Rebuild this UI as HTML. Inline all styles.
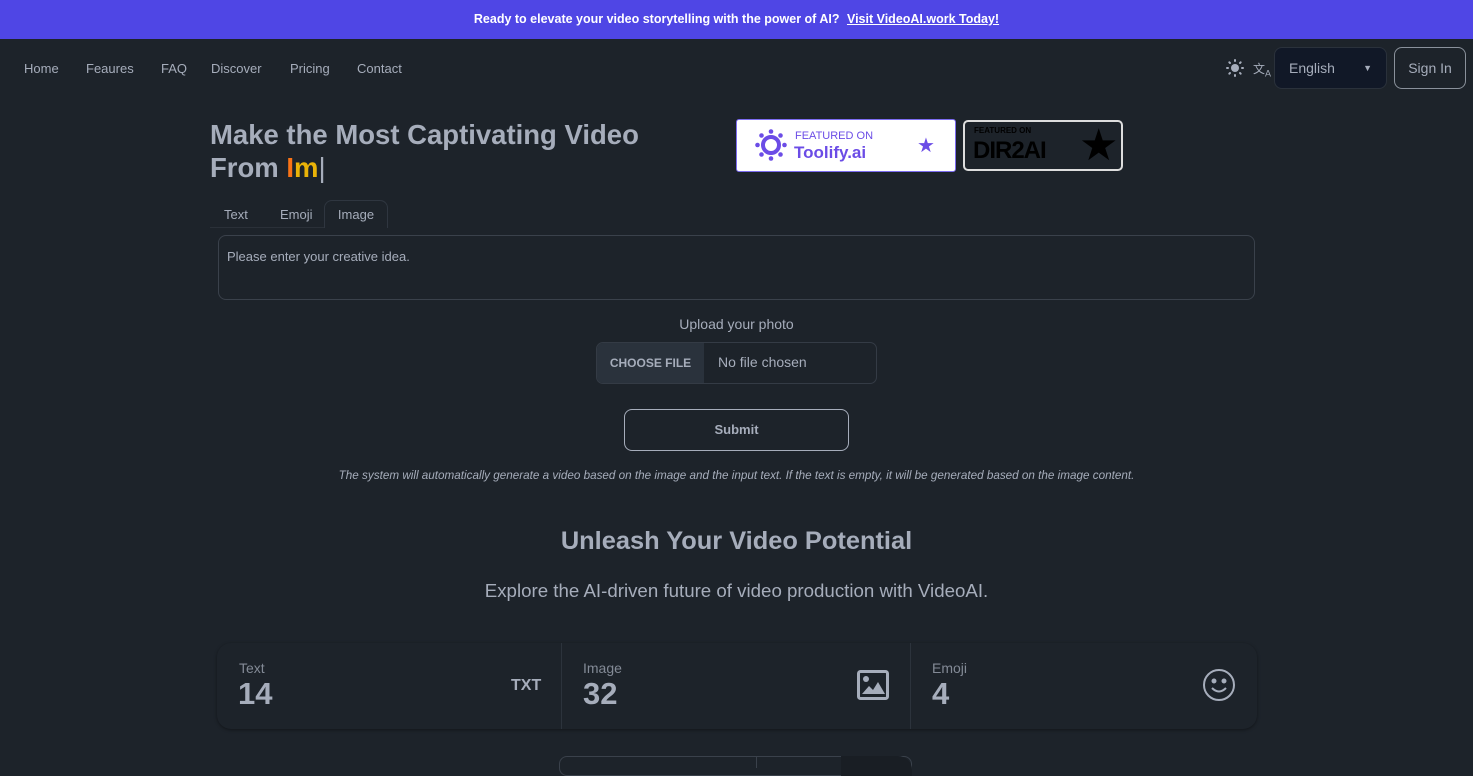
<!DOCTYPE html>
<html><head><meta charset="utf-8"><style>
*{box-sizing:border-box;margin:0;padding:0}
body{width:1473px;height:768px;overflow:hidden;background:#1d232a;color:#a6adbb;font-family:"Liberation Sans",sans-serif;position:relative}
.banner{height:39px;background:#4f46e5;color:#fff;font-size:12.5px;font-weight:bold;text-align:center;line-height:39px}
.banner u{margin-left:4px}
.nav a{position:absolute;top:61px;font-size:13px;color:#a6adbb}
.abs{position:absolute}
h1{position:absolute;left:210px;top:118px;font-size:27.5px;line-height:33px;font-weight:bold;color:#a6adbb}
.tabs span{position:absolute;top:207px;font-size:13px}
</style></head><body>
<div class="banner">Ready to elevate your video storytelling with the power of AI? <u>Visit VideoAI.work Today!</u></div>
<div class="nav">
<a style="left:24px">Home</a><a style="left:86px">Feaures</a><a style="left:161px">FAQ</a><a style="left:211px">Discover</a><a style="left:290px">Pricing</a><a style="left:357px">Contact</a>
</div>
<svg class="abs" style="left:1226px;top:59px" width="18" height="18" viewBox="0 0 18 18" fill="#a6adbb"><circle cx="9" cy="9" r="4"/><g stroke="#a6adbb" stroke-width="2" stroke-linecap="round"><path d="M9 1v1M9 16v1M1 9h1M16 9h1M3.3 3.3l.7.7M14 14l.7.7M3.3 14.7l.7-.7M14 4l.7-.7"/></g></svg>
<div class="abs" style="left:1253px;top:60px;font-size:12px;color:#a6adbb">文<sub style="font-size:9px">A</sub></div>
<div class="abs" style="left:1274px;top:47px;width:113px;height:42px;background:#111827;border:1px solid #2a313b;border-radius:8px;font-size:14px;line-height:40px;padding-left:14px">English<span style="position:absolute;right:14px;top:0;font-size:9px">▼</span></div>
<div class="abs" style="left:1394px;top:47px;width:72px;height:42px;border:1px solid #8a919b;border-radius:8px;font-size:14px;line-height:40px;text-align:center">Sign In</div>
<h1>Make the Most Captivating Video<br>From <span style="color:#f97316">I</span><span style="color:#eab308">m</span><span style="font-weight:normal">|</span></h1>
<div class="abs" style="left:736px;top:119px;width:220px;height:53px;background:#fff;border:1px solid #7c6cf0;border-radius:3px">
<svg class="abs" style="left:18px;top:9px" width="32" height="32" viewBox="0 0 32 32"><circle cx="16" cy="16" r="8" fill="none" stroke="#6b4ce6" stroke-width="4"/><g fill="#6b4ce6"><circle cx="16" cy="2.5" r="2.3"/><circle cx="16" cy="29.5" r="2.3"/><circle cx="2.5" cy="16" r="2.3"/><circle cx="29.5" cy="16" r="2.3"/><circle cx="6.5" cy="6.5" r="2.3"/><circle cx="25.5" cy="25.5" r="2.3"/><circle cx="6.5" cy="25.5" r="2.3"/><circle cx="25.5" cy="6.5" r="2.3"/></g></svg>
<div class="abs" style="left:58px;top:10px;font-size:11px;color:#6b4ce6">FEATURED ON</div>
<div class="abs" style="left:57px;top:23px;font-size:17px;font-weight:bold;color:#6b4ce6">Toolify.ai</div>
<div class="abs" style="left:180px;top:13px;font-size:20px;color:#6b4ce6">★</div>
</div>
<div class="abs" style="left:963px;top:120px;width:160px;height:51px;background:#1d232a;border:2px solid #ddd;border-radius:5px;color:#000">
<div class="abs" style="left:9px;top:4px;font-size:8px;font-weight:bold;color:#000">FEATURED ON</div>
<div class="abs" style="left:8px;top:15px;font-size:24px;font-weight:bold;color:#000;letter-spacing:-1px">DIR2AI</div>
<div class="abs" style="left:114px;top:-2px;font-size:44px;color:#000">★</div>
</div>
<div class="tabs"><span style="left:224px">Text</span><span style="left:280px">Emoji</span></div>
<div class="abs" style="left:324px;top:200px;width:64px;height:28px;border:1px solid #2f3640;border-bottom:none;border-radius:8px 8px 0 0;font-size:13px;text-align:center;line-height:27px">Image</div>
<div class="abs" style="left:210px;top:227px;width:114px;height:1px;background:#2a3038"></div>
<div class="abs" style="left:218px;top:235px;width:1037px;height:65px;border:1px solid #3a414b;border-radius:8px;font-size:13px;padding:13px 8px">Please enter your creative idea.</div>
<div class="abs" style="left:0;width:1473px;top:316px;text-align:center;font-size:14px">Upload your photo</div>
<div class="abs" style="left:596px;top:342px;width:281px;height:42px;border:1px solid #343b45;border-radius:7px;overflow:hidden;font-size:14px">
<div class="abs" style="left:0;top:0;width:107px;height:42px;background:#2a323c;font-size:12px;font-weight:bold;line-height:40px;text-align:center">CHOOSE FILE</div>
<div class="abs" style="left:121px;top:11px">No file chosen</div></div>
<div class="abs" style="left:624px;top:409px;width:225px;height:42px;border:1px solid #a6adbb;border-radius:8px;font-size:13px;font-weight:bold;line-height:40px;text-align:center">Submit</div>
<div class="abs" style="left:0;width:1473px;top:469px;text-align:center;font-size:11.7px;font-style:italic">The system will automatically generate a video based on the image and the input text. If the text is empty, it will be generated based on the image content.</div>
<div class="abs" style="left:0;width:1473px;top:527px;text-align:center;font-size:25.4px;font-weight:bold">Unleash Your Video Potential</div>
<div class="abs" style="left:0;width:1473px;top:580px;text-align:center;font-size:18.7px">Explore the AI-driven future of video production with VideoAI.</div>
<div class="abs" style="left:217px;top:643px;width:1040px;height:86px;border-radius:14px;background:#1d232a;box-shadow:0 1px 3px rgba(0,0,0,.4)">
<div class="abs" style="left:344px;top:0;width:1px;height:86px;background:#2c333c"></div>
<div class="abs" style="left:693px;top:0;width:1px;height:86px;background:#2c333c"></div>
<div class="abs" style="left:22px;top:17px;font-size:14px;color:#838a96">Text</div>
<div class="abs" style="left:21px;top:33px;font-size:31px;font-weight:bold">14</div>
<div class="abs" style="left:294px;top:34px;font-size:16px;font-weight:bold">TXT</div>
<div class="abs" style="left:366px;top:17px;font-size:14px;color:#838a96">Image</div>
<div class="abs" style="left:366px;top:33px;font-size:31px;font-weight:bold">32</div>
<svg class="abs" style="left:640px;top:27px" width="32" height="30" viewBox="0 0 32 30"><rect x="1.5" y="1.5" width="29" height="27" rx="2" fill="none" stroke="#a6adbb" stroke-width="3"/><circle cx="9" cy="9" r="3" fill="#a6adbb"/><path d="M5 24l7-8 4 4 5-8 7 12z" fill="#a6adbb"/></svg>
<div class="abs" style="left:715px;top:17px;font-size:14px;color:#838a96">Emoji</div>
<div class="abs" style="left:715px;top:33px;font-size:31px;font-weight:bold">4</div>
<svg class="abs" style="left:985px;top:25px" width="34" height="34" viewBox="0 0 34 34" fill="none" stroke="#a6adbb" stroke-width="2"><circle cx="17" cy="17" r="15"/><circle cx="12" cy="13" r="1.5" fill="#a6adbb"/><circle cx="22" cy="13" r="1.5" fill="#a6adbb"/><path d="M10 20q7 7 14 0"/></svg>
</div>
<div class="abs" style="left:559px;top:756px;width:353px;height:20px;border:1px solid #3a414b;border-radius:8px"></div>
<div class="abs" style="left:756px;top:756px;width:1px;height:12px;background:#3a414b"></div>
<div class="abs" style="left:841px;top:756px;width:71px;height:20px;background:#191e24;border-radius:0 14px 0 0"></div>
</body></html>
